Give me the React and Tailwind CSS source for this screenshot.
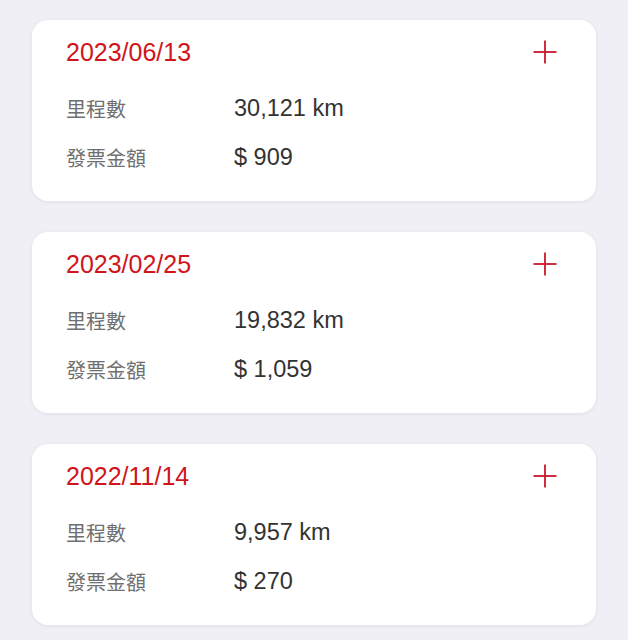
import React from 'react';

const records = [
    { date: '2023/06/13', mileage: '30,121 km', amount: '$ 909' },
    { date: '2023/02/25', mileage: '19,832 km', amount: '$ 1,059' },
    { date: '2022/11/14', mileage: '9,957 km', amount: '$ 270' },
];

const PlusIcon = () => (
    <svg width="24" height="24" viewBox="0 0 24 24" fill="none" stroke="#c8182c" strokeWidth="1.8">
        <line x1="12" y1="0.5" x2="12" y2="23.5" />
        <line x1="0.5" y1="12" x2="23.5" y2="12" />
    </svg>
);

const RecordCard = ({ record }) => (
    <div className="h-[181px] bg-white rounded-[16px] shadow-[0_1px_4px_rgba(0,0,0,0.07)] pl-[34px] pr-[39px] pt-[18px]">
        {/* Header */}
        <div className="flex items-center justify-between h-[28px]">
            <span className="text-[25px] leading-none text-[#d0151c]">{record.date}</span>
            <PlusIcon />
        </div>

        {/* Details */}
        <div className="mt-[18px] flex flex-col">
            <div className="flex items-center h-[49px]">
                <span className="w-[168px] text-[20px] leading-none text-[#707070] pt-[2px]">里程數</span>
                <span className="text-[23.5px] leading-none text-[#333333]">{record.mileage}</span>
            </div>
            <div className="flex items-center h-[49px]">
                <span className="w-[168px] text-[20px] leading-none text-[#707070] pt-[2px]">發票金額</span>
                <span className="text-[23.5px] leading-none text-[#333333]">{record.amount}</span>
            </div>
        </div>
    </div>
);

const App = () => {
    return (
        <div
            className="min-h-screen bg-[#f0eff5] px-[32px] pt-[20px] pb-[20px] flex flex-col gap-[31px]"
            style={{ fontFamily: '"Liberation Sans", "Noto Sans CJK TC", sans-serif' }}
        >
            {records.map((r) => (
                <RecordCard key={r.date} record={r} />
            ))}
        </div>
    );
};

export default App;
